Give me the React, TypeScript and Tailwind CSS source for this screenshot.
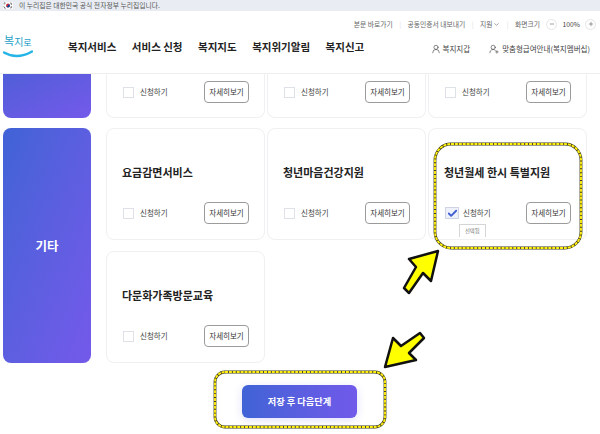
import { Minus, Plus, ChevronDown, UserRound, UserRoundPlus, Check } from "lucide-react";

const FONT = "font-['Noto_Sans_CJK_KR','Noto_Sans',sans-serif]";

function ServiceActions({ checked = false }: { checked?: boolean }) {
    return (
        <div className="flex items-center justify-between">
            <div className={`relative flex items-center pl-[1px] ${checked ? "gap-[4px]" : "gap-[6px]"}`}>
                {checked ? (
                    <span className="flex h-[12px] w-[14px] items-center justify-center border border-[#cfd3e6] bg-[#eef0fa]">
                        <Check className="h-[11px] w-[11px] text-[#3f5fd0]" strokeWidth={4} />
                    </span>
                ) : (
                    <span className="h-[11px] w-[11px] border border-[#dfe1e8] bg-white" />
                )}
                <span className="text-[7.5px] leading-none text-[#444]">신청하기</span>
                {checked && (
                    <span className="absolute left-[15px] top-[17px] border border-b-0 border-[#d5d5d5] bg-white px-[5px] py-[2px] text-[5.3px] leading-[8px] text-[#777]">
                        선택됨
                    </span>
                )}
            </div>
            <button className="h-[22px] w-[45px] rounded-[4px] border border-[#9b9b9b] bg-white text-[7.5px] leading-none text-[#333]">
                자세히보기
            </button>
        </div>
    );
}

function ServiceCard({ title, checked }: { title: string; checked?: boolean }) {
    return (
        <div className="flex h-[112px] flex-col rounded-[8px] border border-[#f0f0f3] bg-white px-[15px] pb-[15px] pt-[35px]">
            <h3 className="text-[11px] font-bold leading-[16px] text-[#222]">{title}</h3>
            <div className="mt-auto">
                <ServiceActions checked={checked} />
            </div>
        </div>
    );
}

function ClippedCard() {
    return (
        <div className="h-[44px] rounded-b-[8px] border border-t-0 border-[#f0f0f3] bg-white px-[15px] pt-[7px]">
            <ServiceActions />
        </div>
    );
}

function Annotations() {
    const frames = [
        { x: 435, y: 144, width: 146, height: 104, rx: 16 },
        { x: 215, y: 372, width: 170, height: 55, rx: 10 },
    ];
    return (
        <svg className="pointer-events-none absolute left-0 top-0" width="600" height="434" viewBox="0 0 600 434">
            {frames.map((f) => (
                <g key={f.x}>
                    <rect {...f} fill="none" stroke="#3a3a20" strokeWidth="2.8" />
                    <rect {...f} fill="none" stroke="#ffee10" strokeWidth="1.9" strokeDasharray="3 0.9" />
                </g>
            ))}
            <polygon points="438,251 431,281 423,273 409,293 404,288 416,267 409,259" fill="#ffff00" stroke="#111" strokeWidth="2.5" strokeLinejoin="round" />
            <polygon points="385,367 393,338 401,346 420,333 424,338 409,353 416,360" fill="#ffff00" stroke="#111" strokeWidth="2.5" strokeLinejoin="round" />
        </svg>
    );
}

export default function App() {
    return (
        <div className={`relative h-[434px] w-[600px] overflow-hidden bg-white ${FONT}`}>
            {/* Gov banner */}
            <div className="flex h-[11px] items-center gap-[6px] bg-[#e9edf3] pl-[3px]">
                <svg width="10" height="7" viewBox="0 0 18 12">
                    <rect width="18" height="12" fill="#fff" />
                    <circle cx="9" cy="6" r="3.5" fill="#cd2e3a" />
                    <path d="M5.5 6a3.5 3.5 0 0 0 7 0 1.75 1.75 0 0 0-3.5 0 1.75 1.75 0 0 1-3.5 0z" fill="#0047a0" />
                    <path d="M1 2l3-1.500M1.500 4l3-2M13.500 1l3 2M13 2.500l3 2M1 8l3 2M1.500 9.500l3 2M13.500 11l3-2M13 9.500l3-2" stroke="#222" strokeWidth="1" />
                </svg>
                <span className="text-[6.8px] leading-none text-[#555]">이 누리집은 대한민국 공식 전자정부 누리집입니다.</span>
            </div>

            {/* Header */}
            <header className="flex h-[63px] border-b border-[#eeeeee] pl-[3px] pr-[4px]">
                <div className="relative mt-[23px] h-[28px] w-[65px] shrink-0">
                    <span className="absolute left-[1px] top-[1px] flex items-start leading-none text-[#1f9fc8]">
                        <span className="text-[11px]">복</span>
                        <span className="mt-[2px] text-[10px]">지</span>
                        <span className="mt-[3px] text-[9px]">로</span>
                    </span>
                    <svg className="absolute left-0 top-[16px]" width="30" height="10" viewBox="0 0 30 10">
                        <path d="M1 2.500Q14 10 29 1.500" fill="none" stroke="#25b4e6" strokeWidth="2.500" strokeLinecap="round" />
                    </svg>
                </div>
                <div className="flex flex-1 flex-col">
                    <div className="flex h-[26px] items-center justify-end gap-[6.4px] text-[6.8px] leading-none text-[#666]">
                        <span>본문 바로가기</span>
                        <span className="text-[#ddd]">|</span>
                        <span>공동인증서 내보내기</span>
                        <span className="text-[#ddd]">|</span>
                        <span className="flex items-center gap-[1px]">
                            지원
                            <ChevronDown className="h-[7px] w-[7px]" />
                        </span>
                        <span className="text-[#ddd]">|</span>
                        <span>화면크기</span>
                        <span className="flex items-center gap-[5px] text-[#444]">
                            <span className="flex h-[11px] w-[11px] items-center justify-center rounded-full border border-[#e6e6e6]">
                                <Minus className="h-[6px] w-[6px]" />
                            </span>
                            100%
                            <span className="flex h-[11px] w-[11px] items-center justify-center rounded-full border border-[#e6e6e6]">
                                <Plus className="h-[6px] w-[6px]" />
                            </span>
                        </span>
                    </div>
                    <div className="mt-[2px] flex items-start justify-between pr-[6px]">
                        <nav className="flex gap-[15.5px] text-[10.5px] font-bold leading-[16px] text-[#222]">
                            <span>복지서비스</span>
                            <span>서비스 신청</span>
                            <span>복지지도</span>
                            <span>복지위기알림</span>
                            <span>복지신고</span>
                        </nav>
                        <div className="mt-[5px] flex items-center gap-[19px] text-[7.5px] leading-none text-[#444]">
                            <span className="flex items-center gap-[2px]">
                                <UserRound className="h-[10px] w-[10px]" strokeWidth={1.5} />
                                복지지갑
                            </span>
                            <span className="flex items-center gap-[3px]">
                                <UserRoundPlus className="h-[10px] w-[10px]" strokeWidth={1.5} />
                                맞춤형급여안내(복지멤버십)
                            </span>
                        </div>
                    </div>
                </div>
            </header>

            {/* Service groups */}
            <main className="pl-[3px] pr-[13px]">
                <section className="flex gap-[15px]">
                    <div className="h-[44px] w-[88px] shrink-0 rounded-b-[8px] bg-gradient-to-br from-[#4f5ed8] to-[#7459ea]" />
                    <div className="grid flex-1 grid-cols-3 gap-[2px]">
                        <ClippedCard />
                        <ClippedCard />
                        <ClippedCard />
                    </div>
                </section>
                <section className="mt-[10px] flex gap-[15px]">
                    <div className="flex w-[88px] shrink-0 items-center justify-center rounded-[8px] bg-gradient-to-br from-[#3f63d6] to-[#7459ea] pt-[2px] text-[12.5px] font-bold text-white">
                        기타
                    </div>
                    <div className="grid flex-1 grid-cols-3 gap-x-[2px] gap-y-[11px]">
                        <ServiceCard title="요금감면서비스" />
                        <ServiceCard title="청년마음건강지원" />
                        <ServiceCard title="청년월세 한시 특별지원" checked />
                        <ServiceCard title="다문화가족방문교육" />
                    </div>
                </section>
                <div className="mt-[22px] flex justify-center pl-[9px]">
                    <button className="h-[33px] w-[115px] rounded-[6px] bg-gradient-to-r from-[#3f63d6] to-[#7059ea] text-[9.2px] font-bold text-white shadow-[0_2px_8px_rgba(90,90,230,0.2)]">
                        저장 후 다음단계
                    </button>
                </div>
            </main>

            <Annotations />
        </div>
    );
}
